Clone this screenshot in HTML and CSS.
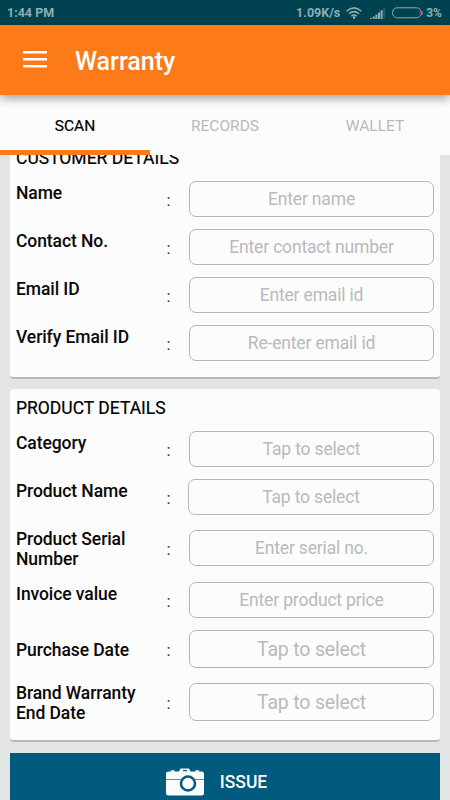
FILE: index.html
```html
<!DOCTYPE html>
<html lang="en">
<head>
<meta charset="utf-8">
<title>Warranty</title>
<link rel="stylesheet" href="styles.css">
</head>
<body>
<div class="screen">
  <div class="status">
    <span class="time">1:44 PM</span>
    <span class="speed">1.09K/s</span>
    <svg class="wifi" width="16" height="12" viewBox="0 0 16 12" fill="none" stroke="#8faeb4" stroke-width="1.5">
      <path d="M.6 4.2Q8-2.4 15.4 4.2M3 6.8q5-4.4 10 0M5.3 9.2q2.7-2.3 5.4 0"/>
      <circle cx="8" cy="10.6" r="1.3" fill="#8faeb4" stroke="none"/>
    </svg>
    <svg class="signal" width="16" height="11" viewBox="0 0 16 11" fill="#8faeb4">
      <path d="M0 10h2v1H0zM2.8 8.5h2V11h-2zM5.4 6.5h2V11h-2zM8 4.5h2V11H8zM10.6 2.2h2V11h-2z"/>
      <path d="M13.2 0h2v11h-2z" opacity=".25"/>
    </svg>
    <svg class="battery" width="31" height="12" viewBox="0 0 31 12">
      <rect x=".6" y=".8" width="28.4" height="10" rx="4.500" fill="none" stroke="#8faeb4"/>
      <path d="M28 4v4" stroke="#b3202c" stroke-width="1.4"/>
      <path d="M30 4v4" stroke="#8faeb4"/>
    </svg>
    <span class="percent">3%</span>
  </div>
  <header class="appbar">
    <svg width="24" height="17" viewBox="0 0 24 17" fill="#fff"><path d="M0 0h24v2.5H0zM0 7h24v2.5H0zM0 14h24v2.5H0z"/></svg>
    <h1>Warranty</h1>
  </header>
  <nav class="tabs">
    <span class="tab active">SCAN</span>
    <span class="tab">RECORDS</span>
    <span class="tab">WALLET</span>
  </nav>
  <main class="content">
    <section class="card customer">
      <h2>CUSTOMER DETAILS</h2>
      <div class="row"><span class="label">Name</span><span class="colon">:</span><span class="field">Enter name</span></div>
      <div class="row"><span class="label">Contact No.</span><span class="colon">:</span><span class="field">Enter contact number</span></div>
      <div class="row"><span class="label">Email ID</span><span class="colon">:</span><span class="field">Enter email id</span></div>
      <div class="row"><span class="label">Verify Email ID</span><span class="colon">:</span><span class="field">Re-enter email id</span></div>
    </section>
    <section class="card product">
      <h2>PRODUCT DETAILS</h2>
      <div class="row"><span class="label">Category</span><span class="colon">:</span><span class="field">Tap to select</span></div>
      <div class="row"><span class="label">Product Name</span><span class="colon">:</span><span class="field wide">Tap to select</span></div>
      <div class="row double serial"><span class="label">Product Serial<br>Number</span><span class="colon">:</span><span class="field">Enter serial no.</span></div>
      <div class="row"><span class="label">Invoice value</span><span class="colon">:</span><span class="field">Enter product price</span></div>
      <div class="row date"><span class="label">Purchase Date</span><span class="colon">:</span><span class="field large">Tap to select</span></div>
      <div class="row double"><span class="label">Brand Warranty<br>End Date</span><span class="colon">:</span><span class="field large">Tap to select</span></div>
    </section>
    <div class="issue">
      <svg width="38" height="28" viewBox="0 0 38 28">
        <path d="M5 3.500V2.200h3.500v1.300H13L14.500.5h8.500l1.500 3H29.500V2.200H33v1.300h2.500Q38 3.500 38 6v19q0 2.500-2.500 2.500h-33Q0 27.500 0 25V6q0-2.500 2.500-2.500z" fill="#fafcfe"/>
        <path d="M17 1.900h4v1.300h-4z" fill="#005b7f"/>
        <path d="M0 11.500h38" stroke="#4c8da8" stroke-width="1"/>
        <circle cx="22" cy="15.500" r="7" fill="#fafcfe" stroke="#005b7f" stroke-width="2.600"/>
      </svg>
      <span>ISSUE</span>
    </div>
  </main>
</div>
</body>
</html>
```
FILE: styles.css
```css
* { box-sizing: border-box; }
body { margin: 0; font-family: Roboto, "Liberation Sans", sans-serif; }
.screen {
  width: 450px;
  height: 800px;
  overflow: hidden;
  display: flex;
  flex-direction: column;
  background: #e3e5e4;
}
.status {
  flex: none;
  height: 25px;
  padding: 0 8px 0 7px;
  display: flex;
  align-items: center;
  background: #00424f;
  color: #8faeb4;
  font-size: 12.5px;
  font-weight: 700;
}
.time { margin-right: auto; }
.speed { margin-right: 6px; }
.wifi { margin-right: 8px; }
.signal { margin: 2px 6px 0 0; }
.battery { margin-right: 3px; }
.percent { font-size: 12px; }
.appbar {
  flex: none;
  height: 70px;
  padding: 1px 0 0 23px;
  display: flex;
  align-items: center;
  gap: 28px;
  background: #fc7a17;
  color: #fff;
  box-shadow: 0 3px 10px rgba(0, 0, 0, .4);
  z-index: 2;
}
.appbar svg { margin-top: -2px; }
.appbar h1 { margin: 0; padding-top: 1px; font-size: 25px; font-weight: 500; }
.tabs {
  flex: none;
  height: 60px;
  display: grid;
  grid-template-columns: repeat(3, 1fr);
  background: #fcfcfc;
  z-index: 1;
}
.tab {
  display: flex;
  align-items: center;
  justify-content: center;
  padding-top: 7px;
  border-bottom: 5px solid transparent;
  font-size: 15.500px;
  font-weight: 400;
  color: #b8babd;
}
.tab.active { color: #000; border-color: #fc7a17; -webkit-text-stroke: .2px #000; }
.content { flex: none; padding: 0 10px; }
.card {
  background: #fcfcfc;
  border-radius: 4px;
  border-bottom: 2px solid #b6b8bd;
  padding: 0 6px;
}
.customer { margin-top: -8px; height: 232px; }
.product { margin-top: 10px; height: 353px; }
.card h2 {
  margin: 0;
  font-size: 17.500px;
  line-height: 20px;
  font-weight: 400;
  -webkit-text-stroke: .2px #000;
  color: #000;
}
.customer h2 { height: 28px; padding-top: 1px; }
.product h2 { height: 36px; padding-top: 9px; }
.row {
  height: 48px;
  display: grid;
  grid-template-columns: 144px 17px 12px 245px;
  align-items: center;
}
.row.double { height: 54px; }
.row.serial { height: 55px; padding-bottom: 1px; }
.row.date { height: 51px; padding-bottom: 1px; }
.label {
  padding-bottom: 12px;
  font-size: 17.500px;
  line-height: 20px;
  font-weight: 500;
  letter-spacing: -.08px;
  color: #080808;
}
.double .label { padding: 1px 0 0; }
.date .label { padding: 1px 0 0; }
.colon { padding: 2px 0 0 6.500px; font-size: 17px; color: #333; }
.field {
  grid-column: 4;
  height: 36px;
  display: flex;
  align-items: center;
  justify-content: center;
  border: 1.500px solid #b4b6b9;
  border-radius: 7px;
  font-size: 17.500px;
  letter-spacing: -.17px;
  color: #b8babd;
}
.field.wide { margin-left: -1px; }
.field.large { height: 38px; padding-top: 1px; font-size: 19.500px; }
.issue {
  margin-top: 11px;
  height: 60px;
  padding: 0 17px 2px 0;
  display: flex;
  align-items: center;
  justify-content: center;
  gap: 16px;
  background: #005b7f;
  color: #fff;
  font-size: 17.500px;
  font-weight: 500;
}
```
